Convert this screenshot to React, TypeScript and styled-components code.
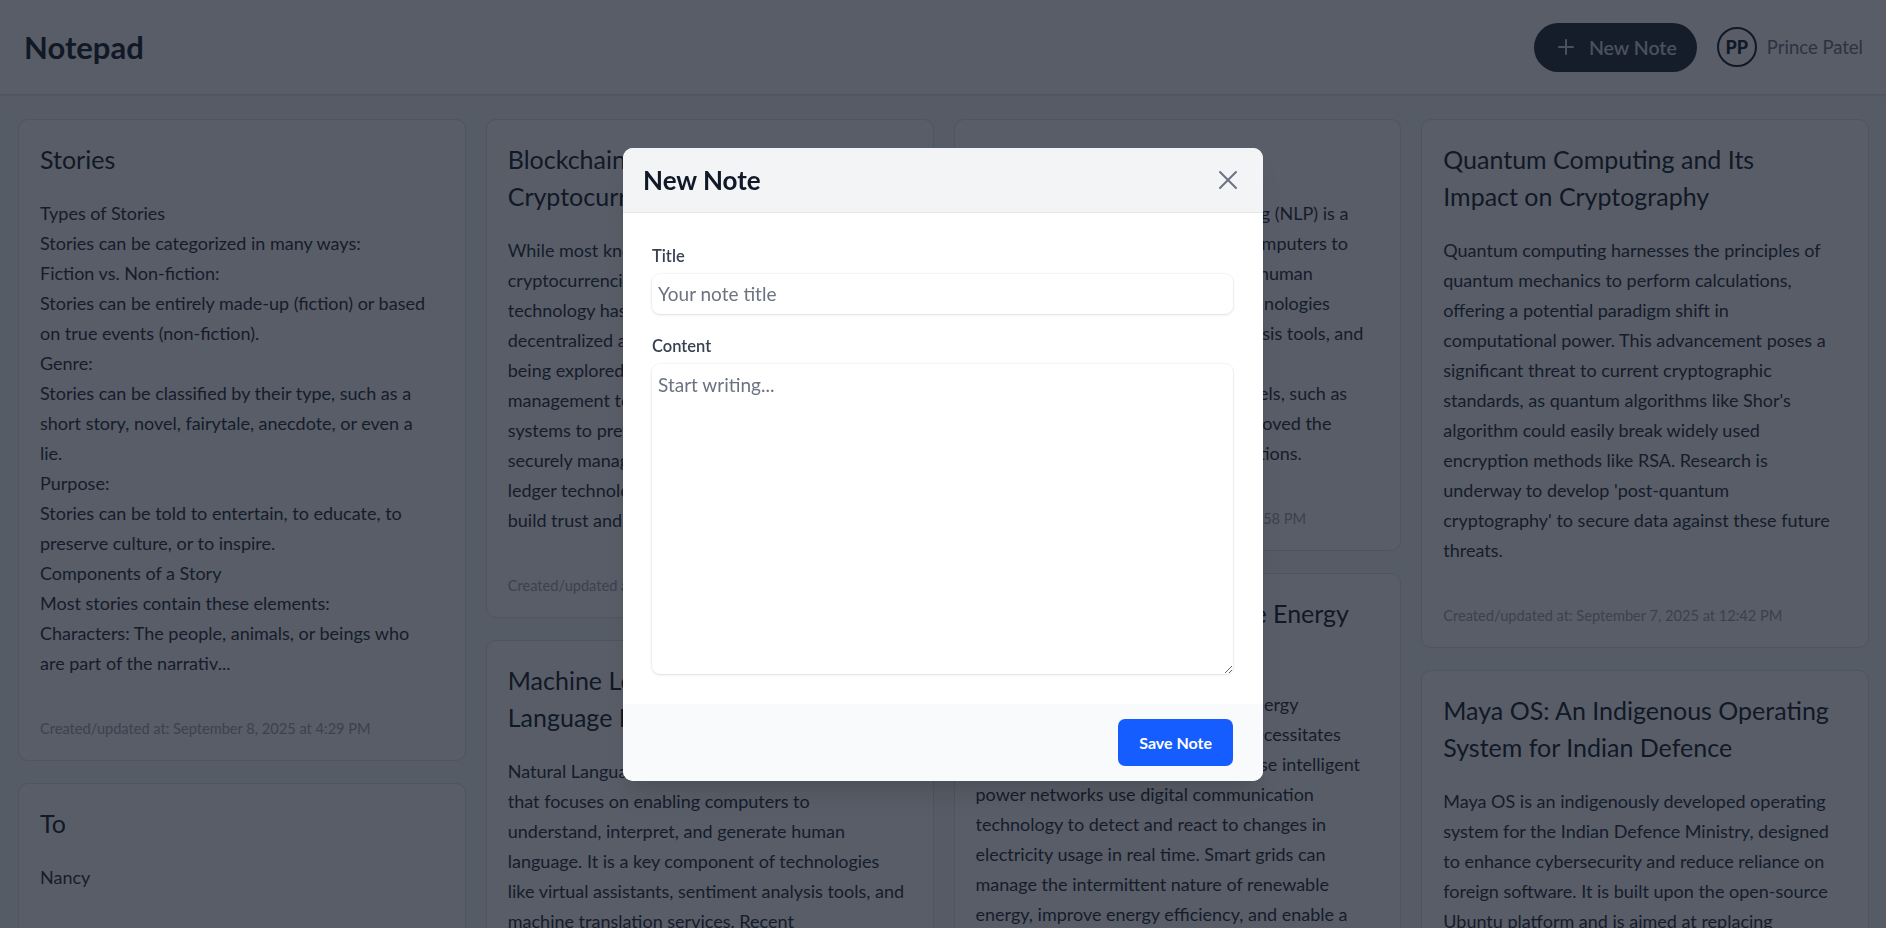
import styled, { createGlobalStyle } from 'styled-components';

const GlobalStyle = createGlobalStyle`
  html, body {
    margin: 0;
    padding: 0;
    height: 100%;
    overflow: hidden;
  }
  body {
    font-family: Lato, "Noto Sans", sans-serif;
    background: #f9fafb;
    color: #1f2937;
  }
  * {
    box-sizing: border-box;
  }
`;

type Note = {
  title: string;
  content: string;
  updated: string;
};

// notes are already split into the 4 masonry columns
const columns: Note[][] = [
  [
    {
      title: 'Stories',
      content: [
        'Types of Stories',
        'Stories can be categorized in many ways:',
        'Fiction vs. Non-fiction:',
        'Stories can be entirely made-up (fiction) or based',
        'on true events (non-fiction).',
        'Genre:',
        'Stories can be classified by their type, such as a',
        'short story, novel, fairytale, anecdote, or even a',
        'lie.',
        'Purpose:',
        'Stories can be told to entertain, to educate, to',
        'preserve culture, or to inspire.',
        'Components of a Story',
        'Most stories contain these elements:',
        'Characters: The people, animals, or beings who',
        'are part of the narrativ...',
      ].join('\n'),
      updated: 'September 8, 2025 at 4:29 PM',
    },
    {
      title: 'To',
      content: 'Nancy',
      updated: 'September 6, 2025 at 9:14 PM',
    },
  ],
  [
    {
      title: 'Blockchain Technology Beyond\nCryptocurrency',
      content: [
        'While most known for powering Bitcoin and other',
        'cryptocurrencies, the underlying blockchain',
        'technology has far broader applications. Its',
        'decentralized and immutable nature is now',
        'being explored in sectors ranging from supply',
        'management to healthcare, finance and voting',
        'systems to prevent fraud and tampering. It can',
        'securely manage sensitive records, and distributed',
        'ledger technology has the potential to help',
        'build trust and transparency in digital systems.',
      ].join('\n'),
      updated: 'September 7, 2025 at 1:12 PM',
    },
    {
      title: 'Machine Learning in Natural\nLanguage Processing',
      content: [
        'Natural Language Processing (NLP) is a field of AI',
        'that focuses on enabling computers to',
        'understand, interpret, and generate human',
        'language. It is a key component of technologies',
        'like virtual assistants, sentiment analysis tools, and',
        'machine translation services. Recent',
        'breakthroughs in deep learning have made these',
        'systems far more accurate and natural.',
      ].join('\n'),
      updated: 'September 6, 2025 at 6:40 PM',
    },
  ],
  [
    {
      title: 'Understanding NLP',
      content: [
        'Modern Natural Language Processing (NLP) is a',
        'branch of AI that enables modern computers to',
        'understand, interpret, and generate human',
        'language. It is the foundation of technologies',
        'like voice assistants, sentiment analysis tools, and',
        'machine translation services. Recent',
        'advancements in deep learning models, such as',
        'transformers, have dramatically improved the',
        'accuracy and fluency of NLP applications.',
      ].join('\n'),
      updated: 'September 7, 2025 at 1:58 PM',
    },
    {
      title: 'Smart Grid and Renewable Energy\nIntegration',
      content: [
        'The worldwide shift to renewable energy',
        'sources like solar and wind power necessitates',
        'the development of smart grids. These intelligent',
        'power networks use digital communication',
        'technology to detect and react to changes in',
        'electricity usage in real time. Smart grids can',
        'manage the intermittent nature of renewable',
        'energy, improve energy efficiency, and enable a',
        'more resilient and sustainable power supply.',
      ].join('\n'),
      updated: 'September 6, 2025 at 3:05 PM',
    },
  ],
  [
    {
      title: 'Quantum Computing and Its\nImpact on Cryptography',
      content: [
        'Quantum computing harnesses the principles of',
        'quantum mechanics to perform calculations,',
        'offering a potential paradigm shift in',
        'computational power. This advancement poses a',
        'significant threat to current cryptographic',
        "standards, as quantum algorithms like Shor's",
        'algorithm could easily break widely used',
        'encryption methods like RSA. Research is',
        "underway to develop 'post-quantum",
        "cryptography' to secure data against these future",
        'threats.',
      ].join('\n'),
      updated: 'September 7, 2025 at 12:42 PM',
    },
    {
      title: 'Maya OS: An Indigenous Operating\nSystem for Indian Defence',
      content: [
        'Maya OS is an indigenously developed operating',
        'system for the Indian Defence Ministry, designed',
        'to enhance cybersecurity and reduce reliance on',
        'foreign software. It is built upon the open-source',
        'Ubuntu platform and is aimed at replacing',
        'Microsoft Windows on defence computers.',
      ].join('\n'),
      updated: 'September 6, 2025 at 11:20 AM',
    },
  ],
];

const Page = styled.div`
  min-height: 100vh;
  background: #f9fafb;
`;

const TopBar = styled.header`
  height: 94px;
  display: flex;
  align-items: center;
  justify-content: space-between;
  padding: 0 23px 0 24px;
  background: #ffffff;
  box-shadow: 0 1px 3px rgba(0, 0, 0, 0.1), 0 1px 2px rgba(0, 0, 0, 0.06);
`;

const Brand = styled.h1`
  margin: 0;
  font-size: 31px;
  font-weight: 700;
  color: #111827;
`;

const Actions = styled.div`
  display: flex;
  align-items: center;
  gap: 20px;
`;

const NewButton = styled.button`
  height: 49px;
  display: flex;
  align-items: center;
  gap: 15px;
  padding: 0 20px 0 24px;
  border: none;
  border-radius: 999px;
  background: #1f2937;
  color: #d1d5db;
  font-family: inherit;
  font-size: 19.5px;
  font-weight: 600;
  cursor: pointer;
`;

const User = styled.div`
  display: flex;
  align-items: center;
  gap: 10px;
`;

const Avatar = styled.div`
  width: 40px;
  height: 40px;
  border-radius: 50%;
  border: 2px solid #111827;
  display: flex;
  align-items: center;
  justify-content: center;
  font-size: 18px;
  font-weight: 900;
  color: #111827;
`;

const UserName = styled.span`
  font-size: 18.5px;
  color: #6b7280;
`;

const Board = styled.main`
  display: flex;
  gap: 20px;
  padding: 25px 17px 0 18px;
`;

const Column = styled.div`
  flex: 1;
  min-width: 0;
  display: flex;
  flex-direction: column;
  gap: 22px;
`;

const Card = styled.article`
  background: #ffffff;
  border: 1px solid #dde1e7;
  border-radius: 10px;
  padding: 21px;
`;

const CardTitle = styled.h2`
  margin: 0 0 20px;
  font-size: 25px;
  line-height: 37px;
  font-weight: 400;
  white-space: pre-line;
  color: #111827;
`;

const CardBody = styled.p`
  margin: 0;
  font-size: 18px;
  line-height: 30px;
  white-space: pre;
  color: #1f2937;
`;

const Stamp = styled.p`
  margin: 41px 0 0;
  font-size: 14.6px;
  line-height: 20px;
  color: #9ca3af;
`;

const Overlay = styled.div`
  position: fixed;
  inset: 0;
  background: rgba(17, 24, 39, 0.7);
  display: flex;
  align-items: center;
  justify-content: center;
`;

const Modal = styled.div`
  width: 640px;
  background: #ffffff;
  border-radius: 10px;
  overflow: hidden;
  box-shadow: 0 20px 25px -5px rgba(0, 0, 0, 0.1), 0 10px 10px -5px rgba(0, 0, 0, 0.04);
`;

const ModalHeader = styled.div`
  height: 65px;
  display: flex;
  align-items: center;
  justify-content: space-between;
  padding: 0 17px 0 20px;
  background: #f3f4f6;
  border-bottom: 1px solid #e5e7eb;
`;

const ModalTitle = styled.h3`
  margin: 0;
  font-size: 26px;
  font-weight: 700;
  color: #111827;
`;

const CloseButton = styled.button`
  width: 36px;
  height: 36px;
  display: flex;
  align-items: center;
  justify-content: center;
  padding: 0;
  border: none;
  background: transparent;
  color: #6b7280;
  cursor: pointer;
`;

const ModalBody = styled.div`
  display: flex;
  flex-direction: column;
  gap: 22px;
  padding: 33px 30px 30px 29px;
`;

const Field = styled.div`
  display: flex;
  flex-direction: column;
  gap: 8px;
`;

const Label = styled.label`
  font-size: 16.5px;
  line-height: 20px;
  font-weight: 600;
  color: #374151;
`;

const TextInput = styled.input`
  height: 40px;
  padding: 0 6px;
  border: none;
  border-radius: 8px;
  background: #ffffff;
  box-shadow: 0 1px 3px rgba(0, 0, 0, 0.1), 0 0 0 1px rgba(0, 0, 0, 0.03);
  font-family: inherit;
  font-size: 19px;
  color: #1f2937;
  outline: none;
  &::placeholder {
    color: #6b7280;
  }
`;

const TextArea = styled.textarea`
  height: 310px;
  padding: 7px 6px;
  border: none;
  border-radius: 8px;
  background: #ffffff;
  box-shadow: 0 1px 3px rgba(0, 0, 0, 0.1), 0 0 0 1px rgba(0, 0, 0, 0.03);
  font-family: inherit;
  font-size: 19px;
  line-height: 28px;
  color: #1f2937;
  outline: none;
  &::placeholder {
    color: #6b7280;
  }
`;

const ModalFooter = styled.div`
  height: 77px;
  display: flex;
  align-items: center;
  justify-content: flex-end;
  padding: 0 30px;
  background: #f9fafb;
`;

const SaveButton = styled.button`
  height: 47px;
  padding: 0 21px;
  border: none;
  border-radius: 7px;
  background: #165dff;
  color: #ffffff;
  font-family: inherit;
  font-size: 16px;
  font-weight: 700;
  cursor: pointer;
`;

const PlusIcon = () => (
  <svg width="16" height="16" viewBox="0 0 16 16" fill="none" stroke="currentColor" strokeWidth="2" strokeLinecap="round">
    <path d="M8 1v14M1 8h14" />
  </svg>
);

const CloseIcon = () => (
  <svg width="20" height="20" viewBox="0 0 20 20" fill="none" stroke="currentColor" strokeWidth="2" strokeLinecap="round">
    <path d="M2 2l16 16M18 2L2 18" />
  </svg>
);

export default function App() {
  return (
    <>
      <GlobalStyle />
      <Page>
        <TopBar>
          <Brand>Notepad</Brand>
          <Actions>
            <NewButton>
              <PlusIcon />
              New Note
            </NewButton>
            <User>
              <Avatar>PP</Avatar>
              <UserName>Prince Patel</UserName>
            </User>
          </Actions>
        </TopBar>
        <Board>
          {columns.map((col, i) => (
            <Column key={i}>
              {col.map((note) => (
                <Card key={note.title}>
                  <CardTitle>{note.title}</CardTitle>
                  <CardBody>{note.content}</CardBody>
                  <Stamp>Created/updated at: {note.updated}</Stamp>
                </Card>
              ))}
            </Column>
          ))}
        </Board>
      </Page>
      <Overlay>
        <Modal>
          <ModalHeader>
            <ModalTitle>New Note</ModalTitle>
            <CloseButton aria-label="Close">
              <CloseIcon />
            </CloseButton>
          </ModalHeader>
          <ModalBody>
            <Field>
              <Label>Title</Label>
              <TextInput placeholder="Your note title" />
            </Field>
            <Field>
              <Label>Content</Label>
              <TextArea placeholder="Start writing..." />
            </Field>
          </ModalBody>
          <ModalFooter>
            <SaveButton>Save Note</SaveButton>
          </ModalFooter>
        </Modal>
      </Overlay>
    </>
  );
}
